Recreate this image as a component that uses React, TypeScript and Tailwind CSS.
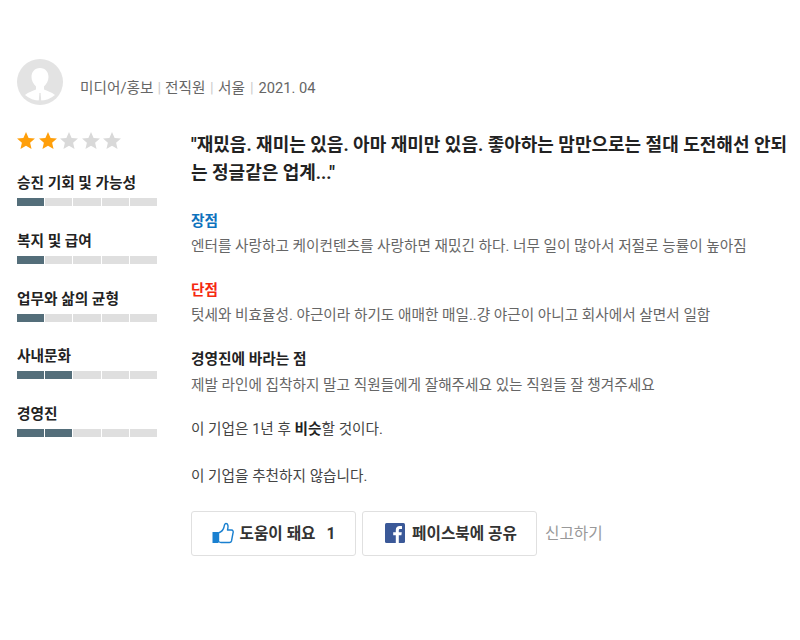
const KR = "font-['Roboto','Noto_Sans_CJK_KR',sans-serif]";

function Star({ on }: { on: boolean }) {
  return (
    <svg viewBox="0 0 20 19" className="w-[18px] h-[17px]" fill={on ? "#ff9f0a" : "#d9d9d9"}>
      <path d="M10 0l2.900 6.600 7.100.7-5.400 4.700 1.600 7L10 15.300 3.800 19l1.600-7L0 7.300l7.100-.7z" />
    </svg>
  );
}

function Rating({ label, value }: { label: string; value: number }) {
  return (
    <div className="mb-[24.75px]">
      <div className="text-[14.7px] leading-[20px] font-bold text-[#222] mb-[5px]">{label}</div>
      <div className="flex gap-[1px] w-[140px]">
        {[0, 1, 2, 3, 4].map((i) => (
          <div key={i} className={`h-[8px] flex-1 ${i < value ? "bg-[#546e7a]" : "bg-[#dfdfdf]"}`} />
        ))}
      </div>
    </div>
  );
}

function Section({ title, color, body, cls, bodyCls }: { title: string; color: string; body: string; cls: string; bodyCls: string }) {
  return (
    <div className={cls}>
      <div className={`text-[14.7px] leading-[20px] font-bold ${color}`}>{title}</div>
      <div className={`text-[14.65px] leading-[20px] text-[#666] ${bodyCls}`}>{body}</div>
    </div>
  );
}

export default function App() {
  return (
    <div className={`${KR} w-[800px] h-[640px] bg-white overflow-hidden pt-[59px] pl-[17px]`}>
      <div className="flex items-center h-[46px]">
        <svg viewBox="0 0 46 46" className="w-[46px] h-[46px]">
          <circle cx="23" cy="23" r="23" fill="#e3e3e3" />
          <path d="M23 9c5.500 0 8.500 4 8.500 9 0 4-2 7-4.500 9.500v3c3 1.500 7.500 2.500 11 5.500a23 23 0 0 1-30 0c3.500-3 8-4 11-5.500v-3c-2.500-2.500-4.500-5.500-4.500-9.500 0-5 3-9 8.500-9z" fill="#fff" />
          <path d="M22.400 34h1.200l.8 10h-2.800z" fill="#e3e3e3" />
        </svg>
        <div className="ml-[17px] mt-[13px] text-[14.65px] text-[#666] flex items-center">
          <span>미디어/홍보</span><span className="mx-[4px] text-[#ccc]">|</span>
          <span>전직원</span><span className="mx-[4.5px] text-[#ccc]">|</span>
          <span>서울</span><span className="mx-[5px] text-[#ccc]">|</span>
          <span>2021. 04</span>
        </div>
      </div>
      <div className="flex mt-[24px]">
        <div className="w-[174px] shrink-0">
          <div className="flex gap-[3.5px] mt-[3px] mb-[24px]">
            {[0, 1, 2, 3, 4].map((i) => <Star key={i} on={i < 2} />)}
          </div>
          <Rating label="승진 기회 및 가능성" value={1} />
          <Rating label="복지 및 급여" value={1} />
          <Rating label="업무와 삶의 균형" value={1} />
          <Rating label="사내문화" value={2} />
          <Rating label="경영진" value={2} />
        </div>
        <div className="flex-1 whitespace-nowrap">
          <div className="text-[18px] leading-[28px] font-bold text-[#222] mt-[2px]">
            <div>"재밌음. 재미는 있음. 아마 재미만 있음. 좋아하는 맘만으로는 절대 도전해선 안되</div>
            <div>는 정글같은 업계..."</div>
          </div>
          <Section cls="mt-[24px]" bodyCls="mt-[5px]" title="장점" color="text-[#0d72bd]" body="엔터를 사랑하고 케이컨텐츠를 사랑하면 재밌긴 하다. 너무 일이 많아서 저절로 능률이 높아짐" />
          <Section cls="mt-[24px]" bodyCls="mt-[5px]" title="단점" color="text-[#f5280f]" body="텃세와 비효율성. 야근이라 하기도 애매한 매일..걍 야근이 아니고 회사에서 살면서 일함" />
          <Section cls="mt-[24px]" bodyCls="mt-[6px]" title="경영진에 바라는 점" color="text-[#222]" body="제발 라인에 집착하지 말고 직원들에게 잘해주세요 있는 직원들 잘 챙겨주세요" />
          <div className="mt-[24px] text-[14.65px] leading-[20px] text-[#444]">이 기업은 1년 후 <b className="text-[#222]">비슷</b>할 것이다.</div>
          <div className="mt-[27px] text-[14.65px] leading-[20px] text-[#444]">이 기업을 추천하지 않습니다.</div>
          <div className="flex items-center mt-[25px]">
            <button className="w-[165px] h-[45px] pl-[1px] border border-[#e0e0e0] rounded-[3px] flex items-center justify-center text-[15.7px] font-bold text-[#333] mr-[6px]">
              <svg viewBox="0 0 22 22" className="w-[22px] h-[22px] mr-[5px] -mt-[2px]">
                <rect x="0.5" y="10" width="6" height="11" fill="#1a80d0" />
                <path d="M6.500 11c2.500-1 5-3.500 5.500-6 .3-1.500.5-3.500 2-3.500 2 0 2.500 2.500 1.500 6.500h4c1.500 0 2 1.500 1.500 3l-1.500 8c-.3 1-1 1.500-2 1.500H9c-1 0-1.500-.3-2.500-1z" fill="#fff" stroke="#1a80d0" strokeWidth="1.400" strokeLinejoin="round" />
              </svg>
              <span>도움이 돼요</span><span className="ml-[11px]">1</span>
            </button>
            <button className="w-[175px] h-[45px] pl-[3px] border border-[#e0e0e0] rounded-[3px] flex items-center justify-center text-[15.7px] font-bold text-[#333]">
              <svg viewBox="0 0 20 20" className="w-[20px] h-[20px] mr-[7px] -mt-[2px]">
                <rect width="20" height="20" rx="1.500" fill="#3b5998" />
                <path d="M13.800 20v-7.700h2.600l.4-3h-3V7.400c0-.9.200-1.500 1.500-1.500H17V3.200c-.3 0-1.200-.1-2.300-.1-2.300 0-3.900 1.400-3.900 4v2.200H8.200v3h2.600V20z" fill="#fff" />
              </svg>
              페이스북에 공유
            </button>
            <span className="ml-[8px] text-[15.7px] text-[#999]">신고하기</span>
          </div>
        </div>
      </div>
    </div>
  );
}
